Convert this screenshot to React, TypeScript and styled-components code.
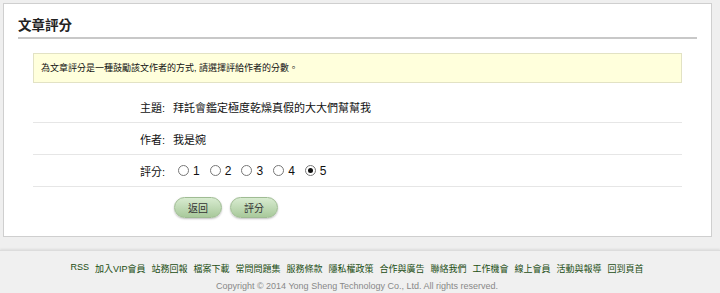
import React, { useState } from 'react';
import styled, { createGlobalStyle } from 'styled-components';

const GlobalStyle = createGlobalStyle`
    body {
        margin: 0;
        background: #efefef;
        font-family: "Liberation Sans", Arial, "Noto Sans CJK TC", sans-serif;
        color: #222;
    }
`;

const Page = styled.div`
    padding: 3px 8px 0px 3px;
`;

const Panel = styled.div`
    background: #fff;
    border: 1px solid #cfcfcf;
    padding: 12px 14px 18px 14px;
    height: 202px;
    box-sizing: content-box;
`;

const Title = styled.h2`
    margin: 0;
    font-size: 13.5px;
    font-weight: bold;
    line-height: 20px;
    padding-bottom: 1px;
    border-bottom: 2px solid #c8c8c8;
`;

const Notice = styled.div`
    margin: 14px 15px 0px 15px;
    background: #ffffdc;
    border: 1px solid #e2e2c4;
    font-size: 9px;
    line-height: 28px;
    padding: 0 7px;
    color: #111;
`;

const Form = styled.div`
    margin: 8px 15px 0px 15px;
`;

const Row = styled.div`
    display: flex;
    align-items: center;
    height: 31px;
    padding-left: 107px;
    border-bottom: 1px solid #e6e6e6;
    font-size: 11px;
    color: #111;
`;

const Label = styled.span`
    margin-right: 8px;
`;

const RadioItem = styled.label`
    display: flex;
    align-items: center;
    margin-right: 5px;
    cursor: pointer;
`;

const Circle = styled.span<{ checked: boolean }>`
    width: 9px;
    height: 9px;
    border: 1px solid #777;
    border-radius: 50%;
    background: #fff;
    margin: 0 4px 0 5px;
    display: flex;
    align-items: center;
    justify-content: center;
    &::after {
        content: '';
        width: 5px;
        height: 5px;
        border-radius: 50%;
        background: ${(p) => (p.checked ? '#111' : 'transparent')};
    }
`;

const Num = styled.span`
    color: #111;
    font-size: 12px;
`;

const Buttons = styled.div`
    display: flex;
    gap: 8px;
    padding: 10px 0 0 141px;
`;

const Button = styled.button`
    width: 48px;
    height: 21px;
    border-radius: 11px;
    border: 1px solid #9fbc93;
    background: linear-gradient(#d8ebd0, #a8c99b);
    box-shadow: 0 1px 2px rgba(0, 0, 0, 0.25);
    font-family: inherit;
    font-size: 10px;
    color: #333;
    padding: 0;
`;

const Footer = styled.footer`
    margin-top: 13px;
    border-top: 1px solid #dcdcdc;
    box-shadow: 0 -1px 2px rgba(0, 0, 0, 0.08);
    background: #f0f0f0;
    padding: 11px 6px 0 0;
    text-align: center;
    height: 32px;
`;

const Links = styled.nav`
    display: flex;
    justify-content: center;
    gap: 6px;
    font-size: 9px;
    white-space: nowrap;
`;

const FooterLink = styled.a`
    color: #1b4d12;
    text-decoration: none;
`;

const Copyright = styled.div`
    margin-top: 6px;
    font-size: 9px;
    color: #888;
`;

const links = ['RSS', '加入VIP會員', '站務回報', '檔案下載', '常問問題集', '服務條款', '隱私權政策', '合作與廣告', '聯絡我們', '工作機會', '線上會員', '活動與報導', '回到頁首'];

export default function App() {
    const [score, setScore] = useState(5);
    return (
        <>
            <GlobalStyle />
            <Page>
                <Panel>
                    <Title>文章評分</Title>
                    <Notice>為文章評分是一種鼓勵該文作者的方式, 請選擇評給作者的分數。</Notice>
                    <Form>
                        <Row>
                            <Label>主題:</Label>
                            <span>拜託會鑑定極度乾燥真假的大大們幫幫我</span>
                        </Row>
                        <Row>
                            <Label>作者:</Label>
                            <span>我是婉</span>
                        </Row>
                        <Row>
                            <Label>評分:</Label>
                            {[1, 2, 3, 4, 5].map((n) => (
                                <RadioItem key={n} onClick={() => setScore(n)}>
                                    <Circle checked={score === n} />
                                    <Num>{n}</Num>
                                </RadioItem>
                            ))}
                        </Row>
                        <Buttons>
                            <Button>返回</Button>
                            <Button>評分</Button>
                        </Buttons>
                    </Form>
                </Panel>
            </Page>
            <Footer>
                <Links>
                    {links.map((l) => (
                        <FooterLink key={l} href="#">{l}</FooterLink>
                    ))}
                </Links>
                <Copyright>Copyright © 2014 Yong Sheng Technology Co., Ltd. All rights reserved.</Copyright>
            </Footer>
        </>
    );
}
